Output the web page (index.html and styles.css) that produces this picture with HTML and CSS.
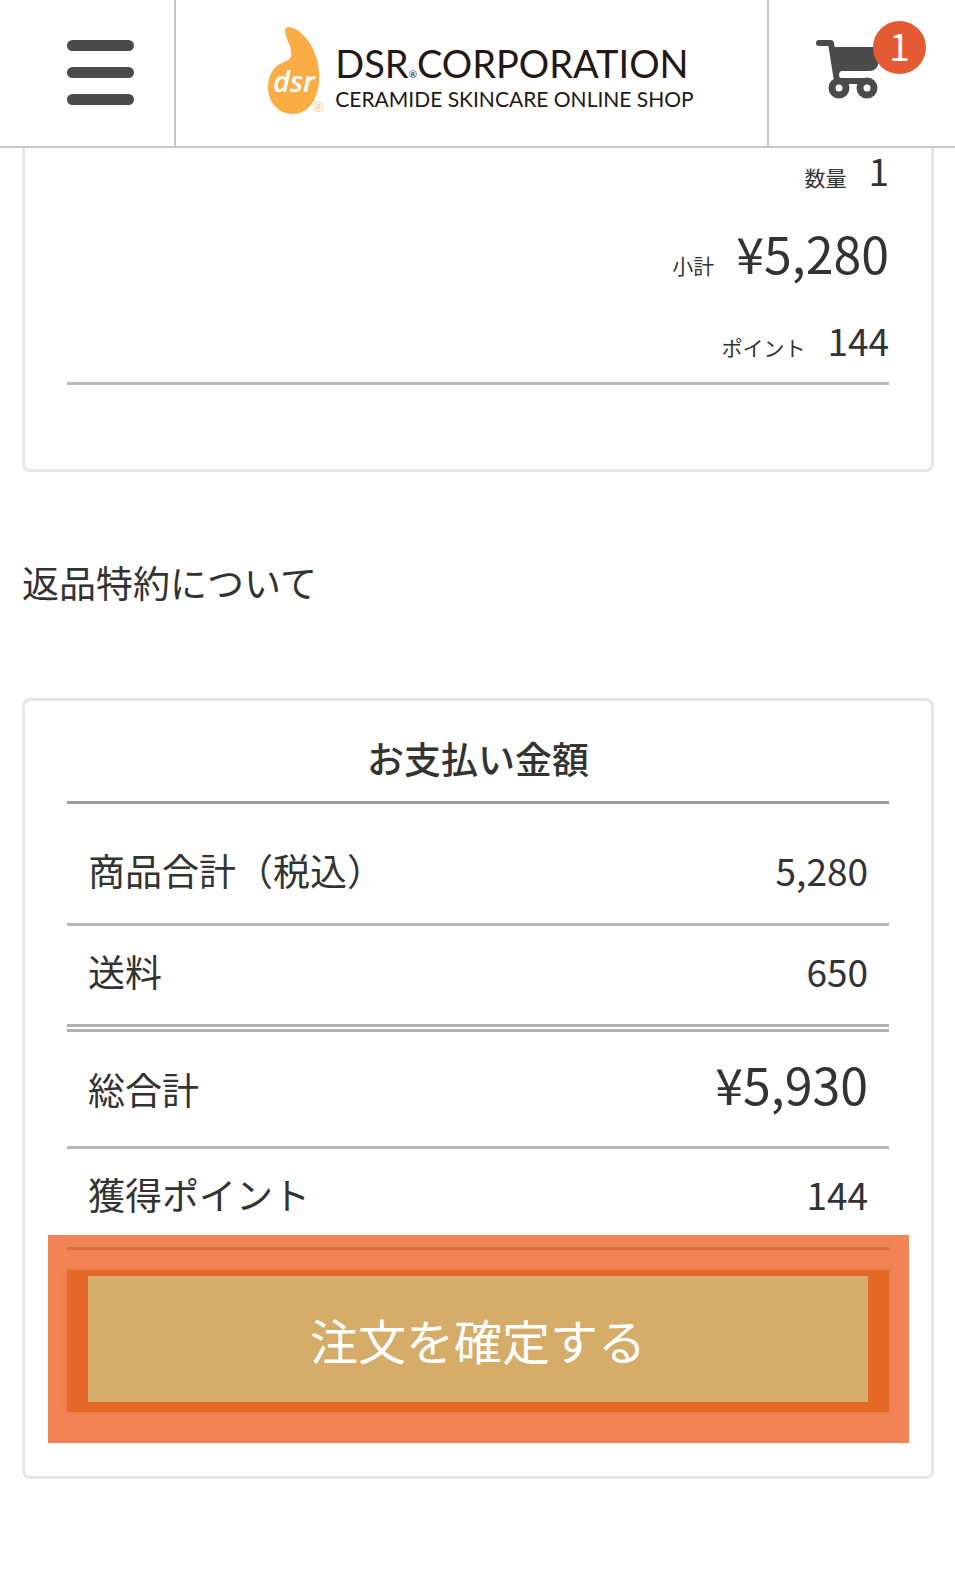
FILE: index.html
```html
<!DOCTYPE html>
<html lang="ja">
<head>
    <meta charset="UTF-8">
    <meta name="viewport" content="width=device-width, initial-scale=1.0">
    <title>DSR CORPORATION</title>
    <link rel="stylesheet" href="styles.css">
</head>

<body>
<header>
    <button class="menu-button" type="button" aria-label="メニュー">
        <span></span>
        <span></span>
        <span></span>
    </button>
    <a class="logo" href="#">
        <svg class="logo-mark" width="60" height="90" viewBox="0 0 60 90" aria-hidden="true">
            <path fill="#fbad45" d="M18 5C18 0 24 0 30 4C44 13 54 34 52 56C50 76 40 88 26 88C11 88 1 76 1 61C1 48 8 39 17 36C23 34 25 31 24 25C23 17 18 11 18 5Z"/>
            <text class="mark-text" x="6" y="66">dsr</text>
            <text class="mark-reg" x="46" y="86">®</text>
        </svg>
        <span class="logo-text">
            <span class="logo-name">DSR<small>®</small>CORPORATION</span>
            <span class="logo-sub">CERAMIDE SKINCARE ONLINE SHOP</span>
        </span>
    </a>
    <a class="cart" href="#" aria-label="カート">
        <svg width="64" height="62" viewBox="0 0 64 62" aria-hidden="true">
            <path fill="none" stroke="#4b4b4b" stroke-width="6" stroke-linecap="round" stroke-linejoin="round" d="M4 5H16L22 43H50"/>
            <path fill="#4b4b4b" d="M17 9H64V20Q64 33 54 33H27Q24 33 24 38L20 38Z"/>
            <circle cx="24" cy="50" r="7" fill="#fff" stroke="#4b4b4b" stroke-width="7"/>
            <circle cx="52" cy="50" r="7" fill="#fff" stroke="#4b4b4b" stroke-width="7"/>
        </svg>
        <span class="badge">1</span>
    </a>
</header>

<main>
    <section class="card item">
        <dl>
            <div><dt>数量</dt><dd class="count">1</dd></div>
            <div><dt>小計</dt><dd class="price">¥5,280</dd></div>
            <div><dt>ポイント</dt><dd>144</dd></div>
        </dl>
    </section>

    <a class="return-link" href="#">返品特約について</a>

    <section class="card payment">
        <h2>お支払い金額</h2>
        <table>
            <tr class="subtotal">
                <th scope="row">商品合計（税込）</th>
                <td>5,280</td>
            </tr>
            <tr class="shipping">
                <th scope="row">送料</th>
                <td>650</td>
            </tr>
            <tr class="total">
                <th scope="row">総合計</th>
                <td class="price">¥5,930</td>
            </tr>
            <tr class="points">
                <th scope="row">獲得ポイント</th>
                <td>144</td>
            </tr>
        </table>
        <form class="confirm" action="#" method="POST">
            <button class="confirm-button" type="submit">注文を確定する</button>
        </form>
    </section>
</main>
</body>
</html>
```

FILE: styles.css
```css
* {
    box-sizing: border-box;
}

body {
    margin: 0;
    background-color: #fefefe;
    color: #333;
    font-family: "Noto Sans CJK JP", sans-serif;
    font-size: 37px;
    line-height: 48px;
}

a {
    color: inherit;
    text-decoration: none;
}

button {
    border: none;
    font-family: inherit;
    cursor: pointer;
}

header {
    display: grid;
    grid-template-columns: 176px 1fr 188px;
    height: 148px;
    border-bottom: 2px solid #c8c8c8;
}

.menu-button {
    display: flex;
    flex-direction: column;
    gap: 16px;
    padding: 40px 40px 0 67px;
    background: none;
    border-right: 2px solid #c8c8c8;
}

.menu-button span {
    width: 100%;
    height: 11px;
    border-radius: 6px;
    background-color: #4b4b4b;
}

.logo {
    display: flex;
    justify-content: center;
    gap: 8px;
    padding: 26px 0 0 18px;
}

.mark-text {
    fill: #fff;
    font: italic 600 29px "Open Sans", sans-serif;
}

.mark-reg {
    fill: #fbc58a;
    font: 13px "Open Sans", sans-serif;
}

.logo-text {
    display: flex;
    flex-direction: column;
    padding-top: 18px;
    color: #231815;
    font-family: Lato, sans-serif;
    white-space: nowrap;
}

.logo-name {
    font-size: 38px;
    line-height: 38px;
}

.logo-name small {
    font-size: 10px;
}

.logo-sub {
    font-size: 21px;
    line-height: 12px;
}

.cart {
    position: relative;
    padding: 38px 0 0 46px;
    border-left: 2px solid #c8c8c8;
    line-height: 0;
}

.badge {
    position: absolute;
    top: 21px;
    right: 29px;
    width: 53px;
    height: 53px;
    border-radius: 50%;
    background-color: #e45a32;
    color: #fff;
    line-height: 48px;
    text-align: center;
}

main {
    padding: 0 21px 0 22px;
}

.card {
    padding: 0 42px;
    border: 3px solid #e6e6e6;
    border-radius: 8px;
}

.item {
    height: 324px;
    border-top: none;
    border-radius: 0 0 8px 8px;
}

dl {
    margin: 0;
    border-bottom: 3px solid #b8b8b8;
}

dl div {
    display: flex;
    justify-content: flex-end;
    align-items: baseline;
    gap: 22px;
    height: 88px;
}

dl div:first-child {
    height: 80px;
    line-height: 44px;
}

dl div:last-child {
    height: 66px;
}

dt {
    font-size: 21px;
}

dd {
    margin: 0;
}

.price {
    font-size: 50px;
}

.return-link {
    display: block;
    padding: 86px 0 92px;
}

.payment {
    padding-bottom: 64px;
}

h2 {
    margin: 0;
    padding: 33px 0 19px;
    border-bottom: 3px solid #9c9c9c;
    font-size: 37px;
    font-weight: 500;
    line-height: 48px;
    text-align: center;
}

table {
    width: 100%;
    border-spacing: 0;
}

th,
td {
    padding: 0 21px;
    border-bottom: 3px solid #b8b8b8;
    font-weight: 400;
}

th {
    text-align: left;
}

td {
    text-align: right;
}

.subtotal th,
.subtotal td {
    height: 122px;
    padding-top: 12px;
}

.shipping th,
.shipping td {
    height: 106px;
    padding-bottom: 8px;
    border-bottom: 8px double #b0b0b0;
}

.total th,
.total td {
    height: 117px;
}

.total td {
    padding-bottom: 12px;
}

.points th,
.points td {
    height: 101px;
    padding-bottom: 8px;
}

.confirm {
    position: relative;
    margin-top: 20px;
    padding: 6px 21px 10px;
    background-color: #d6ac69;
    box-shadow: 0 0 5px rgba(0, 0, 0, 0.2);
}

/* translucent frame round the order button */
.confirm::before {
    content: "";
    position: absolute;
    inset: -35px -20px -31px -19px;
    background-color: rgba(234, 72, 4, 0.68);
}

.confirm-button {
    position: relative;
    width: 100%;
    height: 126px;
    padding: 0;
    background-color: #d6ac69;
    color: #fff;
    font-size: 48px;
}
```
